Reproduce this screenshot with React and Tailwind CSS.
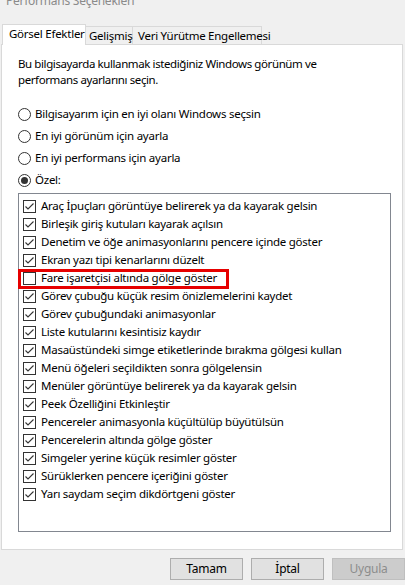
import React from 'react';

const effects = [
  { label: 'Araç İpuçları görüntüye belirerek ya da kayarak gelsin', on: true },
  { label: 'Birleşik giriş kutuları kayarak açılsın', on: true },
  { label: 'Denetim ve öğe animasyonlarını pencere içinde göster', on: true },
  { label: 'Ekran yazı tipi kenarlarını düzelt', on: true },
  { label: 'Fare işaretçisi altında gölge göster', on: false, marked: true },
  { label: 'Görev çubuğu küçük resim önizlemelerini kaydet', on: true },
  { label: 'Görev çubuğundaki animasyonlar', on: true },
  { label: 'Liste kutularını kesintisiz kaydır', on: true },
  { label: 'Masaüstündeki simge etiketlerinde bırakma gölgesi kullan', on: true },
  { label: 'Menü öğeleri seçildikten sonra gölgelensin', on: true },
  { label: 'Menüler görüntüye belirerek ya da kayarak gelsin', on: true },
  { label: 'Peek Özelliğini Etkinleştir', on: true },
  { label: 'Pencereler animasyonla küçültülüp büyütülsün', on: true },
  { label: 'Pencerelerin altında gölge göster', on: true },
  { label: 'Simgeler yerine küçük resimler göster', on: true },
  { label: 'Sürüklerken pencere içeriğini göster', on: true },
  { label: 'Yarı saydam seçim dikdörtgeni göster', on: true },
];

const modes = [
  { label: 'Bilgisayarım için en iyi olanı Windows seçsin', on: false },
  { label: 'En iyi görünüm için ayarla', on: false },
  { label: 'En iyi performans için ayarla', on: false },
  { label: 'Özel:', on: true },
];

function Radio({ on }) {
  return (
    <span className="w-[13px] h-[13px] rounded-full border border-[#333333] bg-white flex items-center justify-center shrink-0">
      {on && <span className="w-[7px] h-[7px] rounded-full bg-[#333333]" />}
    </span>
  );
}

function Check({ on }) {
  return (
    <span className="w-[13px] h-[13px] border border-[#333333] bg-white shrink-0 flex">
      {on && (
        <svg width="11" height="11" viewBox="0 0 11 11">
          <path d="M1.5 5.5 L4 8 L9.5 2.5" fill="none" stroke="#333333" strokeWidth="1.1" />
        </svg>
      )}
    </span>
  );
}

function Button({ children, disabled }) {
  return (
    <button
      className={
        disabled
          ? 'w-[73px] h-[22px] bg-[#cccccc] border border-[#bfbfbf] text-[#8c8c8c] text-[12px]'
          : 'w-[73px] h-[22px] bg-[#e1e1e1] border border-[#adadad] text-black text-[12px]'
      }
    >
      {children}
    </button>
  );
}

export default function App() {
  return (
    <div
      className="w-[405px] h-[585px] bg-[#f0f0f0] overflow-hidden text-black text-[11.5px] tracking-[-0.25px]"
      style={{ fontFamily: '"Noto Sans", "Open Sans", sans-serif' }}
    >
      <div className="h-[24px] overflow-hidden pl-[6px]">
        <p className="mt-[-7px] leading-[16px] text-[12px] text-[#8a8a8a]">Performans Seçenekleri</p>
      </div>

      <div className="flex items-end pl-[2px] h-[20px] whitespace-nowrap">
        <div className="w-[84px] h-[21px] mb-[-1px] relative z-10 bg-white border border-b-0 border-[#d9d9d9] pl-[6px] leading-[18px]">
          Görsel Efektler
        </div>
        <div className="w-[47px] h-[18px] border border-b-0 border-l-0 border-[#d9d9d9] pl-[3px] leading-[18px]">
          Gelişmiş
        </div>
        <div className="w-[129px] h-[18px] border border-b-0 border-l-0 border-[#d9d9d9] pl-[5px] leading-[18px]">
          Veri Yürütme Engellemesi
        </div>
      </div>

      <div className="mx-[1px] w-[402px] h-[506px] bg-white border border-[#d9d9d9] pt-[11px] pl-[16px]">
        <p className="leading-[16px] w-[330px] tracking-[-0.4px]">
          Bu bilgisayarda kullanmak istediğiniz Windows görünüm ve performans ayarlarını seçin.
        </p>

        <div className="mt-[19px] flex flex-col gap-[8px]">
          {modes.map((m) => (
            <label key={m.label} className="flex items-center gap-[4px] h-[14px]">
              <Radio on={m.on} />
              <span>{m.label}</span>
            </label>
          ))}
        </div>

        <div className="mt-[6px] w-[373px] h-[339px] border border-[#828790] pt-[3px]">
          {effects.map((e) => (
            <div key={e.label} className="relative flex items-center h-[18px] pl-[4px] gap-[5px]">
              <Check on={e.on} />
              <span className="whitespace-nowrap">{e.label}</span>
              {e.marked && (
                <span className="absolute left-[-1px] top-[0px] w-[211px] h-[20px] border-[3px] border-[#e60000]" />
              )}
            </div>
          ))}
        </div>
      </div>

      <div className="flex justify-end gap-[8px] mt-[8px]">
        <Button>Tamam</Button>
        <Button>İptal</Button>
        <Button disabled>Uygula</Button>
      </div>
    </div>
  );
}
